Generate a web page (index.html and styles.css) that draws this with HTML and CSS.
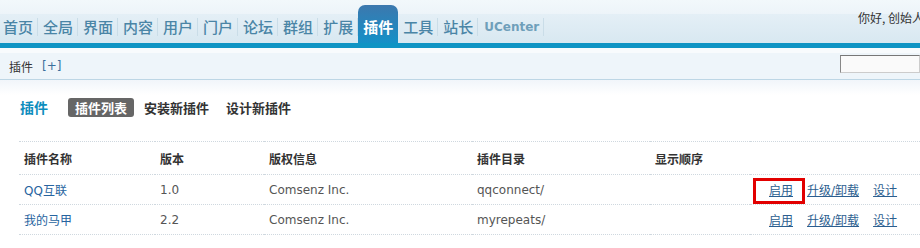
FILE: index.html
```html
<!DOCTYPE html>
<html lang="zh-CN">
<head>
  <meta charset="UTF-8" />
  <title>插件 - 管理中心</title>
  <link rel="stylesheet" href="styles.css">
</head>
<body>
  <!-- Top navigation -->
  <div class="header">
    <ul class="nav">
      <li><a href="#">首页</a></li>
      <li><a href="#">全局</a></li>
      <li><a href="#">界面</a></li>
      <li><a href="#">内容</a></li>
      <li><a href="#">用户</a></li>
      <li><a href="#">门户</a></li>
      <li><a href="#">论坛</a></li>
      <li><a href="#">群组</a></li>
      <li><a href="#">扩展</a></li>
      <li class="on"><a href="#">插件</a></li>
      <li><a href="#">工具</a></li>
      <li><a href="#">站长</a></li>
      <li class="uc"><a href="#">UCenter</a></li>
    </ul>
    <div class="userinfo">你好, 创始人</div>
  </div>

  <!-- Breadcrumb bar -->
  <div class="subnav">
    <span class="crumb">插件</span>
    <a class="add" href="#">[+]</a>
    <input class="search" type="text">
  </div>

  <div class="main">
    <div class="itemtitle">
      <h3>插件</h3>
      <ul class="tab1">
        <li class="current"><a href="#">插件列表</a></li>
        <li><a href="#">安装新插件</a></li>
        <li><a href="#">设计新插件</a></li>
      </ul>
    </div>

    <table class="tb">
      <tr class="thead">
        <th class="c1">插件名称</th>
        <th class="c2">版本</th>
        <th class="c3">版权信息</th>
        <th class="c4">插件目录</th>
        <th class="c5">显示顺序</th>
        <th class="c6"></th>
      </tr>
      <tr>
        <td><a class="name" href="#">QQ互联</a></td>
        <td>1.0</td>
        <td>Comsenz Inc.</td>
        <td>qqconnect/</td>
        <td></td>
        <td class="ops">
          <span class="marked"><a href="#">启用</a></span><a href="#">升级/卸载</a><a href="#">设计</a>
        </td>
      </tr>
      <tr>
        <td><a class="name" href="#">我的马甲</a></td>
        <td>2.2</td>
        <td>Comsenz Inc.</td>
        <td>myrepeats/</td>
        <td></td>
        <td class="ops">
          <a href="#">启用</a><a href="#">升级/卸载</a><a href="#">设计</a>
        </td>
      </tr>
    </table>
  </div>
</body>
</html>
```

FILE: styles.css
```css
* { box-sizing: border-box; }
body {
  margin: 0;
  width: 920px;
  overflow: hidden;
  background: #fff;
  font: 12px "DejaVu Sans", "Noto Sans CJK SC", sans-serif;
  color: #444;
}
a { text-decoration: none; }

/* header */
.header {
  display: flex;
  justify-content: space-between;
  height: 43px;
  overflow: hidden;
  background: linear-gradient(#f2f8fb, #edf4f9 14px, #e4eff6 14px, #d8e8f1 43px);
}

.nav {
  display: flex;
  align-items: flex-end;
  margin: 0 0 0 -2px;
  padding: 0;
  list-style: none;
}

.nav li {
  height: 18px;
  margin-bottom: 7px;
  border-right: 1px solid #cadde8;
  line-height: 18px;
}

.nav a {
  display: block;
  padding: 0 4px 0 5px;
  font: 500 15px/18px "Noto Sans CJK SC", sans-serif;
  color: #4a85a6;
}

.nav li.on {
  height: 38px;
  margin-bottom: 0;
  border-right: none;
  border-radius: 7px 7px 0 0;
  background: linear-gradient(#3c78ae, #1590c7);
}

.nav li.on a {
  padding: 13px 5px 7px;
  font-weight: 700;
  color: #fff;
}

.nav li.uc a {
  padding: 0 4px 0 6px;
  font: 700 12px/18px "DejaVu Sans", sans-serif;
  color: #6f9fba;
}

.userinfo {
  flex: none;
  width: 62px;
  padding-top: 11px;
  white-space: nowrap;
  line-height: 14px;
  font-family: "Noto Sans CJK SC", sans-serif;
  color: #333;
}

/* breadcrumb: blue bar, white line, light strip */
.subnav {
  display: flex;
  align-items: center;
  height: 37px;
  padding: 5px 0 0 9px;
  border-top: 5px solid #0f94c4;
  border-bottom: 1px solid #bdd6e5;
  background: #eef5fa;
  box-shadow: inset 0 5px 0 #f8fbfd;
}

.crumb {
  font-family: "Noto Sans CJK SC", sans-serif;
  color: #333;
}

.add {
  margin-left: 9px;
  color: #3a6f9c;
}

.search {
  align-self: flex-start;
  width: 80px;
  height: 18px;
  margin: 2px 0 0 auto;
  border: 1px solid #ccc;
  border-top-color: #777;
  border-left-color: #888;
  background: #fafafa;
}

/* main area */
.main {
  padding: 17px 0 0 19px;
  background: linear-gradient(#f1f5fa, #fff 15px);
}

.itemtitle {
  display: flex;
  align-items: center;
  height: 20px;
}

.itemtitle h3 {
  margin: 0 20px 0 1px;
  font: 700 14px "Noto Sans CJK SC", sans-serif;
  color: #0d8dbd;
}

.tab1 {
  display: flex;
  margin: 0;
  padding: 0;
  list-style: none;
}

.tab1 li {
  margin-right: 3px;
}

.tab1 a {
  display: block;
  padding: 0 7px;
  line-height: 20px;
  border-radius: 3px;
  font: 700 13px "Noto Sans CJK SC", sans-serif;
  color: #333;
}

.tab1 .current a {
  background: #666;
  color: #fff;
}

/* table */
.tb {
  width: 901px;
  margin-top: 24px;
  border-collapse: collapse;
}

.tb th,
.tb td {
  padding: 0 5px;
  border-top: 1px dotted #cfd8df;
  border-bottom: 1px dotted #cfd8df;
  text-align: left;
  vertical-align: middle;
  white-space: nowrap;
}

.tb th {
  height: 33px;
  font: 700 12px "Noto Sans CJK SC", sans-serif;
  color: #333;
}

.tb td {
  height: 30px;
  color: #555;
}

.tb .c1 { width: 136px; }
.tb .c2 { width: 109px; }
.tb .c3 { width: 208px; }
.tb .c4 { width: 178px; }
.tb .c6 { width: 170px; }

.name {
  color: #2764a0;
}

.ops {
  text-align: right;
  padding-right: 18px !important;
}

.ops a {
  margin-left: 14px;
  color: #2b5e8f;
  text-decoration: underline;
}

.marked {
  position: relative;
}

.marked::after {
  content: "";
  position: absolute;
  left: -2px;
  right: -12px;
  top: -6px;
  bottom: -6px;
  border: 3px solid #e20000;
}
```
